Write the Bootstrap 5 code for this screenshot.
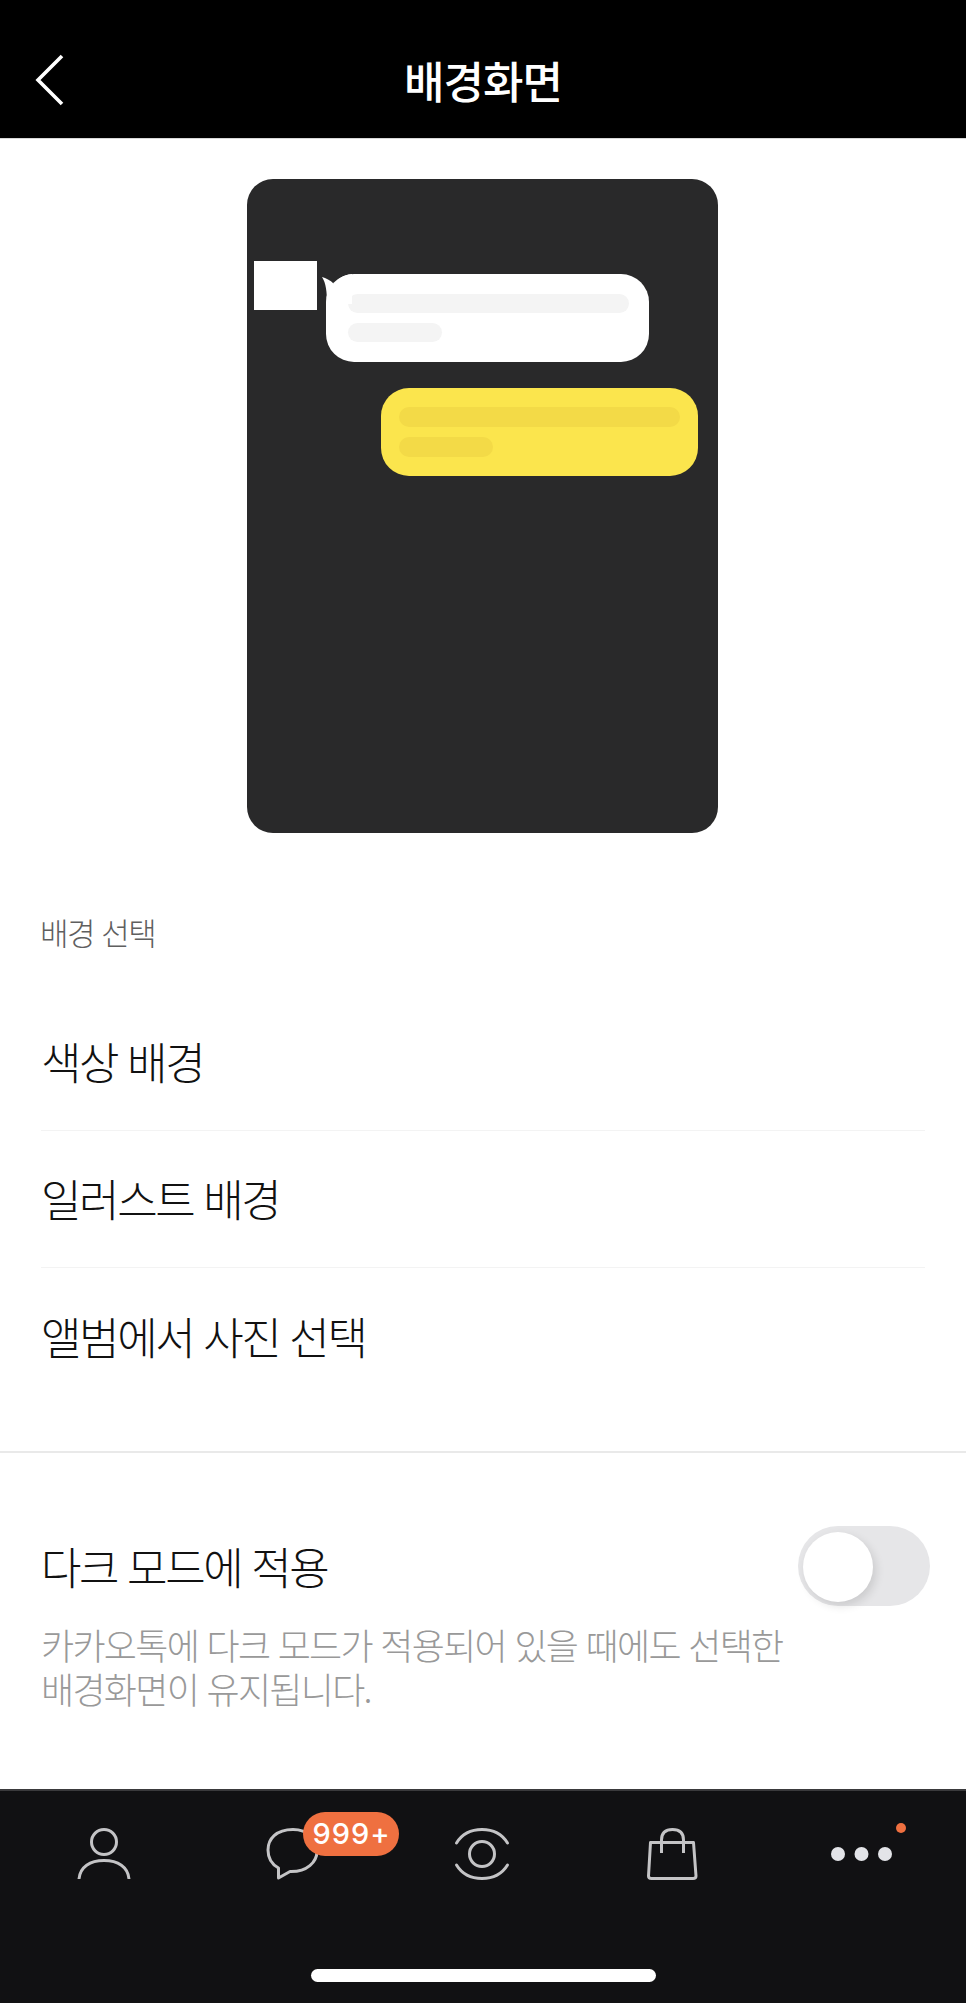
<!DOCTYPE html>
<html lang="ko">
<head>
  <meta charset="UTF-8" />
  <title>배경화면</title>
  <link rel="stylesheet" href="https://cdn.jsdelivr.net/npm/bootstrap@5.3.3/dist/css/bootstrap.min.css" />
  <style>
    body {
      width: 966px;
      height: 2003px;
      overflow: hidden;
      background: #fff;
      font-family: "Noto Sans CJK KR", "Liberation Sans", sans-serif;
      color: #111;
    }

    /* top bar */
    .top-bar { height: 139px; background: #000; border-bottom: 1px solid #d8d8d8; padding-top: 22px; }
    .top-side { width: 110px; }
    .top-title { font-size: 44px; font-weight: 500; color: #fff; letter-spacing: -1px; line-height: 1; }
    .back-icon { margin-left: 30px; }

    /* chat preview */
    .preview-box { width: 471px; height: 654px; margin: 40px 0 0 247px; background: #29292a; border-radius: 26px; padding: 82px 20px 0 7px; }
    .mini-avatar { width: 63px; height: 49px; background: #fff; }
    .mini-bubble { position: relative; height: 88px; border-radius: 28px; display: flex; flex-direction: column; gap: 10px; }
    .mini-bubble.other { width: 323px; margin: 13px 0 0 9px; background: #fff; padding: 20px 22px; }
    .mini-bubble.mine { width: 317px; margin: 26px 0 0 auto; background: #fbe54d; padding: 19px 18px; }
    .mini-tail { position: absolute; left: -6px; top: 0; }
    .mini-line { height: 20px; border-radius: 10px; }
    .other .mini-line { background: #f4f4f4; }
    .mine .mini-line { background: #f3da47; }
    .mini-line.long { width: 281px; }
    .mini-line.short { width: 94px; }

    /* settings list */
    .sect-label { margin: 80px 0 0; padding-left: 40px; font-size: 31px; line-height: 38px; color: #5f5f5f; letter-spacing: -1.5px; font-weight: 300; }
    .menu-list { margin: 43px 41px 0; }
    .menu-row { height: 137px; display: flex; align-items: center; padding: 0 0 2px; border: 0; border-bottom: 1px solid #f3f3f3; border-radius: 0; font-size: 44px; font-weight: 300; letter-spacing: -2.4px; color: #111; background: transparent; }
    .menu-row:last-child { border-bottom: 0; }
    .sect-rule { height: 2px; margin-top: 46px; background: #e9e9e9; }

    .dark-block { height: 336px; padding: 73px 36px 0 41px; }
    .dark-title { font-size: 44px; line-height: 56px; letter-spacing: -2.4px; margin: 12px 0 0; font-weight: 300; }
    .dark-note { font-size: 36px; line-height: 44px; letter-spacing: -1.7px; color: #999; margin: 16px 0 0; width: 760px; word-break: keep-all; font-weight: 300; }
    .switch-track { width: 132px; height: 80px; border-radius: 40px; background: #e6e6e8; padding: 6px 5px; flex-shrink: 0; }
    .switch-knob { width: 70px; height: 70px; border-radius: 50%; background: #fff; box-shadow: 3px 4px 10px rgba(0, 0, 0, .12); }

    /* bottom tabs */
    .tab-bar { height: 214px; background: #111113; border-top: 2px solid #3a3a3c; }
    .tab-row { padding: 33px 9px 0; height: 178px; }
    .tab-item { position: relative; flex: 1 1 0; height: 60px; display: flex; justify-content: center; }
    .tab-item svg { overflow: visible; }
    .count-pill { position: absolute; left: 104px; top: -12px; width: 96px; height: 44px; padding-left: 2px; border-radius: 22px; background: #ef7040; color: #fff; font-family: Inter, "Liberation Sans", sans-serif; font-weight: 500; font-size: 29px; line-height: 44px; letter-spacing: 1px; text-align: center; }
    .new-dot { position: absolute; left: 129px; top: -1px; width: 10px; height: 10px; border-radius: 50%; background: #ef7040; }
    .home-pill { width: 345px; height: 13px; border-radius: 7px; background: #fff; margin: 0 auto; }
  </style>
</head>
<body>
  <header class="top-bar d-flex align-items-center">
    <div class="top-side">
      <svg class="back-icon d-block" width="36" height="52" viewBox="0 0 36 52" fill="none" stroke="#fff" stroke-width="3.6">
        <path d="M32 2 L8 26 L32 50" />
      </svg>
    </div>
    <div class="top-title flex-fill text-center">배경화면</div>
    <div class="top-side"></div>
  </header>

  <div class="preview-box">
    <div class="d-flex align-items-start">
      <div class="mini-avatar"></div>
      <div class="mini-bubble other">
        <svg class="mini-tail" width="34" height="30" viewBox="0 0 34 30">
          <path d="M2 3 C6 4 10 6 14 10 C17 5 23 1 32 0 L32 30 L7 30 C7 18 6 9 2 3 Z" fill="#fff" />
        </svg>
        <div class="mini-line long"></div>
        <div class="mini-line short"></div>
      </div>
    </div>
    <div class="mini-bubble mine">
      <div class="mini-line long"></div>
      <div class="mini-line short"></div>
    </div>
  </div>

  <p class="sect-label">배경 선택</p>
  <div class="list-group menu-list">
    <div class="list-group-item menu-row">색상 배경</div>
    <div class="list-group-item menu-row">일러스트 배경</div>
    <div class="list-group-item menu-row">앨범에서 사진 선택</div>
  </div>
  <div class="sect-rule"></div>

  <section class="dark-block">
    <div class="d-flex justify-content-between align-items-start">
      <h2 class="dark-title">다크 모드에 적용</h2>
      <div class="switch-track"><div class="switch-knob"></div></div>
    </div>
    <p class="dark-note">카카오톡에 다크 모드가 적용되어 있을 때에도 선택한 배경화면이 유지됩니다.</p>
  </section>

  <nav class="tab-bar">
    <div class="tab-row d-flex">
      <div class="tab-item">
        <svg width="60" height="60" viewBox="0 0 60 60" fill="none" stroke="#c4c4c6" stroke-width="3">
          <circle cx="30" cy="18" r="12.5" />
          <path d="M5 55 C6 43 16 36.500 30 36.500 C44 36.500 54 43 55 55" />
        </svg>
      </div>
      <div class="tab-item">
        <svg width="60" height="60" viewBox="0 0 60 60" fill="none" stroke="#c4c4c6" stroke-width="3">
          <path d="M30 5.500 C13 5.500 5 15 5 26 C5 35 10 41 15.500 44 L15.500 54 L27 47.500 C44 48 54 38 54 27 C54 15 45 5.500 30 5.500 Z" stroke-linejoin="round" />
        </svg>
        <span class="count-pill">999+</span>
      </div>
      <div class="tab-item">
        <svg width="60" height="60" viewBox="0 0 60 60" fill="none" stroke="#c4c4c6" stroke-width="3" stroke-linecap="round">
          <path d="M3.500 19 C9 10 18 5.500 29 5.500 C40 5.500 49 10 54.500 19" />
          <path d="M3.500 41 C9 50 18 54.500 29 54.500 C40 54.500 49 50 54.500 41" />
          <circle cx="29" cy="30" r="12.500" />
        </svg>
      </div>
      <div class="tab-item">
        <svg width="60" height="60" viewBox="0 0 60 60" fill="none" stroke="#c4c4c6" stroke-width="3" stroke-linejoin="round">
          <path d="M7.500 18.500 L50.500 18.500 L53 52 Q53 54.500 50 54.500 L8.500 54.500 Q5.500 54.500 5.500 52 Z" />
          <path d="M18.500 29 L18.500 16 C18.500 9 22.500 5.500 29.500 5.500 C36.500 5.500 40.500 9 40.500 16 L40.500 29" />
        </svg>
      </div>
      <div class="tab-item">
        <svg width="60" height="60" viewBox="0 0 60 60" fill="#e3e4e8">
          <circle cx="6" cy="30" r="7" />
          <circle cx="29.500" cy="30" r="7" />
          <circle cx="53" cy="30" r="7" />
        </svg>
        <span class="new-dot"></span>
      </div>
    </div>
    <div class="home-pill"></div>
  </nav>
</body>
</html>
